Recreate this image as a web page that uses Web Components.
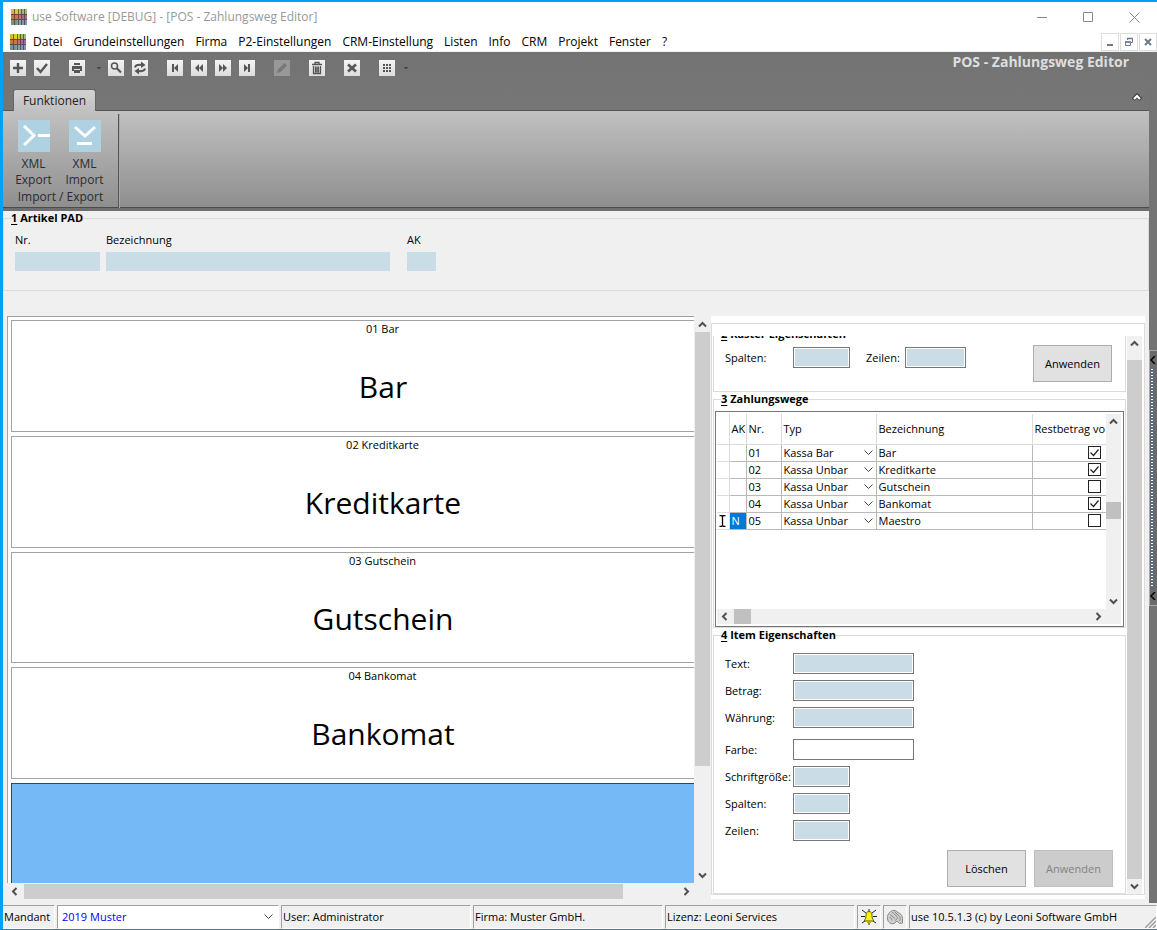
<!DOCTYPE html>
<html lang="de">
<head>
<meta charset="utf-8">
<meta name="viewport" content="width=device-width, initial-scale=1">
<title>use Software - POS - Zahlungsweg Editor</title>
<style>
  html, body { margin: 0; height: 100%; }
  body { font: 11px/16px "Open Sans", "Noto Sans", sans-serif; color: #000; background: #f0f0f0; }
</style>
</head>
<body>
<pos-app></pos-app>
<script>
function define(name, css, html, setup) {
  const template = document.createElement('template');
  template.innerHTML = `<style>*,:host{box-sizing:border-box}:host([hidden]){display:none}${css}</style>${html}`;
  customElements.define(name, class extends HTMLElement {
    connectedCallback() {
      if (this.shadowRoot) return;
      this.attachShadow({ mode: 'open' }).append(template.content.cloneNode(true));
      if (setup) setup(this, this.shadowRoot);
    }
  });
}

/* ---------- application mark ---------- */
define('app-logo', `:host{display:block;flex:none;width:16px;height:16px} svg{display:block}`, `
<svg width="16" height="16" viewBox="0 0 16 16" aria-hidden="true">
  <path fill="#d9b24c" d="M0 0h4v5H0z"/><path fill="#ccd226" d="M4 0h5v5H4z"/><path fill="#9fb87a" d="M9 0h7v5H9z"/>
  <path fill="#c67b27" d="M0 5h4v5H0z"/><path fill="#cf7064" d="M4 5h6v5H4z"/><path fill="#a56ba0" d="M10 5h6v5h-6z"/>
  <path fill="#7d9092" d="M0 10h6v6H0z"/><path fill="#7fa5ae" d="M6 10h5v6H6z"/><path fill="#8294b8" d="M11 10h5v6h-5z"/>
  <path stroke="#4a2a20" stroke-width="1" d="M0 5.500h16M0 10.500h16M3.500 0v16M7.500 0v16M10.500 0v16M13.500 0v16" opacity=".65"/>
</svg>`);

/* ---------- tool buttons ---------- */
const glyphs = {
  add: '<path d="M8 3v10M3 8h10" stroke-width="2.400"/>',
  ok: '<path d="M3 8l3.500 4L13 4" stroke-width="2.400"/>',
  print: '<path d="M5 3h6v2H5zM3 6h10v5h-2V9H5v2H3zM5 10h6v3H5z" fill="currentColor" stroke="none"/>',
  find: '<circle cx="6.500" cy="6" r="3"/><path d="M9 8.500l4 4" stroke-width="2.200"/>',
  reload: '<path d="M3 7.500C3.500 5 6 4.500 10 5M13 8.500c-.5 2.500-3 3-7 2.500" stroke-width="2"/><path d="M9 1.500L13.500 5 9 8zM7 8l-4.500 3L7 14.500z" fill="currentColor" stroke="none"/>',
  first: '<path d="M5 4h2v8H5zM11 4v8L7 8z" fill="currentColor" stroke="none"/>',
  prev: '<path d="M8 4v8L4 8zM12 4v8L8 8z" fill="currentColor" stroke="none"/>',
  next: '<path d="M4 4v8l4-4zM8 4v8l4-4z" fill="currentColor" stroke="none"/>',
  last: '<path d="M5 4v8l4-4zM9 4h2v8H9z" fill="currentColor" stroke="none"/>',
  edit: '<path d="M3 13l1-3.500L10.500 3 13 5.500 6.500 12z" fill="currentColor" stroke="none"/>',
  trash: '<path d="M3 4.500h10M6 4V2.500h4V4M4.500 6v7.500h7V6M6.500 6.500v6M9.500 6.500v6M8 6.500v6" stroke-width="1.300"/>',
  cancel: '<path d="M4 4.500l8 7M12 4.500l-8 7" stroke-width="2.600"/>',
  grid: '<path d="M4 4h2v2H4zM7 4h2v2H7zM10 4h2v2h-2zM4 7h2v2H4zM7 7h2v2H7zM10 7h2v2h-2zM4 10h2v2H4zM7 10h2v2H7zM10 10h2v2h-2z" fill="currentColor" stroke="none"/>'
};
define('tool-button', `
:host{display:block;flex:none}
button{display:block;width:16px;height:16px;padding:0;border:0;background:linear-gradient(#f4f4f5,#dcdcde);color:#555}
button:disabled{background:#989898;color:#777}
svg{display:block}`,
`<button type="button"><svg width="16" height="16" viewBox="0 0 16 16" fill="none" stroke="currentColor" stroke-width="1.500" aria-hidden="true"></svg></button>`,
(el, root) => {
  const b = root.querySelector('button');
  b.setAttribute('aria-label', el.getAttribute('name'));
  b.disabled = el.hasAttribute('disabled');
  root.querySelector('svg').innerHTML = glyphs[el.getAttribute('icon')];
});
define('tool-caret', `:host{display:block;flex:none;width:6px;height:3px;background:#484848;clip-path:polygon(0 0,100% 0,50% 100%)}`, ``);

/* ---------- scroll bar: thumb position is given as before/size/after shares ---------- */
define('scroll-bar', `
:host{display:flex;flex:none;background:#f0f0f0;width:15px;flex-direction:column}
:host([horizontal]){width:auto;height:15px;flex-direction:row}
svg{display:block;flex:none;width:15px;height:15px}
:host([horizontal]) svg{transform:rotate(-90deg)}
.thumb{background:var(--thumb,#cdcdcd)}
path{fill:none;stroke:#505050;stroke-width:2}`,
`<svg viewBox="0 0 15 15" aria-hidden="true"><path d="M4 9.500L7.500 6 11 9.500"/></svg><i class="pre"></i><i class="thumb"></i><i class="post"></i><svg viewBox="0 0 15 15" aria-hidden="true"><path d="M4 5.500L7.500 9 11 5.500"/></svg>`,
(el, root) => {
  const shares = el.getAttribute('shares').split(' ');
  ['.pre', '.thumb', '.post'].forEach((s, i) => root.querySelector(s).style.flex = shares[i] + ' 0 0px');
});

/* ---------- labelled text box ---------- */
define('text-field', `
:host{display:flex;align-items:center}
label{flex:none;width:var(--label,68px);white-space:nowrap}
input{min-width:0;width:var(--box,57px);height:21px;font:inherit;padding:0 4px;border:1px solid #767676;border-radius:0;background:#cadde6;box-shadow:inset 0 0 0 1px #fff;outline:0}
:host([stacked]){flex-direction:column;align-items:flex-start;gap:4px}
:host([stacked]) label{width:auto}
:host([stacked]) input{height:19px;border:0;box-shadow:none}
:host([blank]) input{background:#fff}`,
`<label for="box"></label><input id="box" type="text">`,
(el, root) => root.querySelector('label').textContent = el.getAttribute('label'));

/* ---------- group frame with numbered caption ---------- */
define('group-box', `
:host{display:block}
fieldset{margin:0;padding:0;border:1px solid #dcdcdc;min-width:0;height:100%;display:flow-root}
legend{margin-left:7px;padding:0;font-weight:700;line-height:14px}
u{text-underline-offset:2px}`,
`<fieldset><legend><u></u> <span></span></legend><slot></slot></fieldset>`,
(el, root) => {
  root.querySelector('u').textContent = el.getAttribute('number');
  root.querySelector('span').textContent = el.getAttribute('caption');
});

define('push-button', `
:host{display:block;flex:none}
button{display:block;width:79px;height:37px;padding:0;border:1px solid #adadad;background:#e1e1e1;font:inherit;color:#000}
button:disabled{background:#ccc;border-color:#bfbfbf;color:#838383}`,
`<button type="button"><slot></slot></button>`,
(el, root) => root.querySelector('button').disabled = el.hasAttribute('disabled'));

/* ---------- title bar and menu ---------- */
define('title-bar', `
:host{display:flex;align-items:center;height:30px;padding-left:8px;background:#fff;color:#999;font-size:12px}
span{flex:1;padding-left:5px}
button{width:46px;height:28px;border:0;padding:0;background:none;color:#888}
svg{display:block;margin:auto}`,
`<app-logo></app-logo><span>use Software [DEBUG] - [POS - Zahlungsweg Editor]</span>
<button aria-label="Minimieren"><svg width="11" height="11" fill="none" stroke="currentColor"><path d="M0 5.500h10"/></svg></button>
<button aria-label="Maximieren"><svg width="11" height="11" fill="none" stroke="currentColor"><path d="M.5.5h9v9h-9z"/></svg></button>
<button aria-label="Schließen"><svg width="11" height="11" fill="none" stroke="currentColor"><path d="M.5.5l10 10M10.500.5l-10 10"/></svg></button>`);

define('menu-bar', `
:host{display:flex;align-items:center;height:20px;padding-left:7px;background:#fff;border-bottom:1px solid #f0f0f0;font-size:12px}
nav{display:flex;flex:1;gap:11px;padding-left:7px}
a{color:#000;text-decoration:none;white-space:nowrap}
.mdi{display:flex;gap:1px}
button{width:18px;height:18px;padding:0;border:1px solid #dedede;background:#fff;color:#6b7a8c}
svg{display:block;margin:auto}`,
`<app-logo></app-logo><nav><a href="#">Datei</a><a href="#">Grundeinstellungen</a><a href="#">Firma</a><a href="#">P2-Einstellungen</a><a href="#">CRM-Einstellung</a><a href="#">Listen</a><a href="#">Info</a><a href="#">CRM</a><a href="#">Projekt</a><a href="#">Fenster</a><a href="#">?</a></nav>
<div class="mdi">
<button aria-label="Fenster minimieren"><svg width="10" height="10"><path fill="currentColor" d="M2 7h6v2H2z"/></svg></button>
<button aria-label="Fenster wiederherstellen"><svg width="10" height="10" fill="none" stroke="currentColor"><path d="M3.500 3V1.500h5v4H7M1 5h5.500v3.500h-5V5"/><path d="M3 1.500h6M1 5h6" stroke-width="1.500"/></svg></button>
<button aria-label="Fenster schließen"><svg width="10" height="10" fill="none" stroke="currentColor" stroke-width="2"><path d="M2 2l6 6M8 2L2 8"/></svg></button>
</div>`);

/* ---------- tool bar and ribbon ---------- */
define('tool-bar', `
:host{display:block;height:59px;background:linear-gradient(#737373,#767676);border-bottom:1px solid #555}
.row{display:flex;align-items:flex-start;height:36px}
.tools{display:flex;align-items:center;gap:19px;flex:1;padding:8px 0 0 7px}
.set{display:flex;align-items:center;gap:8px}
.menu{margin:0 -2px 0 3px}
h1{margin:0;padding:0 20px 0 0;font-size:14px;line-height:20px;font-weight:700;color:#dedede}
.tabs{display:flex;align-items:flex-end;height:23px;padding-left:10px}
.tabs button{height:23px;width:83px;border:1px solid #666;border-bottom:0;border-radius:3px 3px 0 0;background:linear-gradient(#d2d2d2,#bfbfbf);margin-bottom:-1px;font:inherit;font-size:12px;color:#222;padding:0 0 1px}
.fold{margin-left:auto;padding:0 7px 10px}
.fold svg{display:block}`,
`<div class="row"><div class="tools">
<div class="set"><tool-button icon="add" name="Neu"></tool-button><tool-button icon="ok" name="Speichern"></tool-button></div>
<div class="set"><tool-button icon="print" name="Drucken"></tool-button><tool-caret class="menu"></tool-caret><tool-button icon="find" name="Suchen"></tool-button><tool-button icon="reload" name="Aktualisieren"></tool-button></div>
<div class="set"><tool-button icon="first" name="Erster"></tool-button><tool-button icon="prev" name="Voriger"></tool-button><tool-button icon="next" name="Nächster"></tool-button><tool-button icon="last" name="Letzter"></tool-button></div>
<tool-button icon="edit" name="Bearbeiten" disabled></tool-button><tool-button icon="trash" name="Löschen"></tool-button><tool-button icon="cancel" name="Abbrechen"></tool-button>
<div class="set"><tool-button icon="grid" name="Ansicht"></tool-button><tool-caret></tool-caret></div>
</div><h1>POS - Zahlungsweg Editor</h1></div>
<div class="tabs"><button type="button">Funktionen</button><div class="fold"><svg width="10" height="8" viewBox="0 0 10 8" fill="none" aria-hidden="true"><path d="M1 6.500l4-4 4 4" stroke="#444" stroke-width="4"/><path d="M2 6l3-3 3 3" stroke="#fff" stroke-width="2"/></svg></div></div>`);

define('ribbon-action', `
:host{display:block}
button{display:block;width:51px;padding:0;border:0;background:none;font:inherit;font-size:12px;line-height:16px;color:#2c2c2c}
svg{display:block;margin:0 auto 4px;background:#aed2e1}
path{fill:none;stroke:#fff;stroke-width:3}`,
`<button type="button"><svg width="32" height="32" aria-hidden="true"><path/></svg><slot></slot></button>`,
(el, root) => root.querySelector('path').setAttribute('d', el.getAttribute('kind') === 'out' ? 'M6 6l10 9.500L6 25M20 15.500h12' : 'M6 7l10 9L26 7M8 23.500h15'));

define('ribbon-bar', `
:host{display:flex;height:100px;background:linear-gradient(#c1c1c1,#8e8e8e);border-bottom:3px solid #6f6f6f;box-shadow:inset 0 -1px #4c4c4c}
section{width:116px;margin-top:3px;border-right:1px solid #555;box-shadow:1px 0 #a8a8a8;font-size:12px;color:#2c2c2c;text-align:center}
.acts{display:flex;padding:6px 0 0 5px}
p{margin:1px 0 0;line-height:16px}`,
`<section><div class="acts"><ribbon-action kind="out">XML<br>Export</ribbon-action><ribbon-action kind="in">XML<br>Import</ribbon-action></div><p>Import / Export</p></section>`);

/* ---------- payment pad ---------- */
define('pay-tile', `
:host{display:flex;flex-direction:column;align-items:center;min-height:0;overflow:hidden;background:#fff;border:1px solid #a3a3a3;border-right:0;padding-left:60px;text-align:center}
small{font-size:11px;line-height:16px;padding-right:1px}
b{font-weight:400;font-size:30px;line-height:44px;margin-top:28px}
:host([active]){background:#75baf6;border:0;border-top:1px solid #2d4a50;border-left:1px solid #2d4a50}`,
`<small></small><b></b>`,
(el, root) => {
  root.querySelector('small').textContent = el.getAttribute('code') || '';
  root.querySelector('b').textContent = el.getAttribute('text') || '';
});
define('pay-pad', `
:host{display:grid;grid-template-columns:minmax(0,1fr) 16px;grid-template-rows:minmax(0,1fr) 16px}
.tiles{display:grid;grid-template-rows:repeat(4,minmax(0,1fr)) 100px;gap:4px;padding:3px 0 0 3px;background:#fff;border:1px solid #a3a3a3;border-width:1px 0 0 1px;margin-right:1px}
.v{margin-top:1px}.h{margin:1px 1px 0 0}`,
`<div class="tiles"><pay-tile code="01 Bar" text="Bar"></pay-tile><pay-tile code="02 Kreditkarte" text="Kreditkarte"></pay-tile><pay-tile code="03 Gutschein" text="Gutschein"></pay-tile><pay-tile code="04 Bankomat" text="Bankomat"></pay-tile><pay-tile active></pay-tile></div>
<scroll-bar class="v" shares="0 432 101"></scroll-bar><scroll-bar class="h" horizontal shares="2 598 56"></scroll-bar>`);

/* ---------- payment table ---------- */
define('pay-table', `
:host{display:grid;grid-template-columns:minmax(0,1fr) 15px;grid-template-rows:195px 15px;padding:2px 2px 2px 1px;border:1px solid #767676;background:#fff;--thumb:#c0c0c0}
.view{overflow:hidden}
table{border-collapse:collapse;table-layout:fixed;width:100%}
th,td{padding:0 0 0 2px;font-weight:400;text-align:left;white-space:nowrap;overflow:hidden;border:1px solid #b9b9b9;border-width:0 1px 1px 0;height:17px;line-height:16px}
th{height:30px;border-color:#dcdcdc}
th:last-child,td:last-child{border-right:0}
td:first-child{border-color:#dcdcdc;padding:0}
td:first-child svg{display:block;margin:auto}
td.n{background:#0078d7;color:#fff}
td:last-child{text-align:right;padding-right:5px}
.type{display:flex;align-items:center;padding-right:2px}
select{appearance:none;flex:1;min-width:0;height:16px;border:0;border-radius:0;padding:0;background:none;font:inherit;color:#000}
input{appearance:none;display:block;margin:0;width:13px;height:13px;border:1px solid #222;background:#fff}
.ck{display:grid;justify-content:end;align-items:center}
.ck input,.ck svg{grid-area:1/1}
.ck svg{z-index:1;pointer-events:none;visibility:hidden}
.ck input:checked+svg{visibility:visible}
.corner{background:#f0f0f0}`,
`<div class="view"><table><colgroup><col style="width:12px"><col style="width:17px"><col style="width:35px"><col style="width:95px"><col><col style="width:74px"></colgroup>
<thead><tr><th></th><th>AK</th><th>Nr.</th><th>Typ</th><th>Bezeichnung</th><th>Restbetrag vo</th></tr></thead><tbody></tbody></table></div>
<scroll-bar shares="73 17 75"></scroll-bar><scroll-bar horizontal shares="2 17 340"></scroll-bar><div class="corner"></div>`,
(el, root) => {
  const rows = [['01', 'Kassa Bar', 'Bar', 1], ['02', 'Kassa Unbar', 'Kreditkarte', 1], ['03', 'Kassa Unbar', 'Gutschein', 0], ['04', 'Kassa Unbar', 'Bankomat', 1], ['05', 'Kassa Unbar', 'Maestro', 0]];
  root.querySelector('tbody').innerHTML = rows.map(([nr, type, name, on], i) => `<tr>
<td>${i === 4 ? '<svg width="7" height="12" fill="none" stroke="#000" aria-hidden="true"><path d="M.5.5h2l1 1 1-1h2M.5 11.500h2l1-1 1 1h2M3.500 1.500v9" stroke-width="1.300"/></svg>' : ''}</td>
<td class="${i === 4 ? 'n' : ''}">${i === 4 ? 'N' : ''}</td><td>${nr}</td>
<td><div class="type"><select aria-label="Typ ${nr}"><option>${type}</option></select><svg width="10" height="6" fill="none" stroke="#444" aria-hidden="true"><path d="M.5.5l4 4 4-4"/></svg></div></td>
<td>${name}</td><td><div class="ck"><input type="checkbox" aria-label="Restbetrag ${nr}" ${on ? 'checked' : ''}><svg width="13" height="13" fill="none" stroke="#222" stroke-width="1.200" aria-hidden="true"><path d="M2.500 6.500l3 3 5-6"/></svg></div></td></tr>`).join('');
});

/* ---------- property pane ---------- */
define('property-pane', `
:host{display:block;background:#fff;padding:7px 0 4px}
.frame{height:100%;border:1px solid #dcdcdc;padding:12px 2px 0 1px;display:grid;grid-template-columns:minmax(0,1fr) 15px;column-gap:1px}
.view{overflow:hidden;display:flex;flex-direction:column;min-height:0}
.g2{flex:none;height:65px;margin-top:-9px}
.g3{flex:none;height:236px}
.g4{flex:1;min-height:0}
.raster{display:flex;align-items:flex-start;padding:4px 13px 0 11px}
.raster text-field+text-field{--label:39px;--box:61px;margin-left:16px}
.raster push-button{margin-left:auto}
.raster text-field{margin-top:2px}
pay-table{margin:5px 1px 0}
.form{display:grid;gap:6px;padding:11px 0 0 11px;--box:121px}
.form .short{--box:57px}
.form .gap{margin-top:5px}
.acts{display:flex;justify-content:flex-end;gap:8px;padding:9px 12px 0 0}
`,
`<div class="frame"><div class="view">
<group-box class="g2" number="2" caption="Raster Eigenschaften"><div class="raster"><text-field label="Spalten:"></text-field><text-field label="Zeilen:"></text-field><push-button>Anwenden</push-button></div></group-box>
<group-box class="g3" number="3" caption="Zahlungswege"><pay-table></pay-table></group-box>
<group-box class="g4" number="4" caption="Item Eigenschaften"><div class="form">
<text-field label="Text:"></text-field><text-field label="Betrag:"></text-field><text-field label="Währung:"></text-field><text-field class="gap" blank label="Farbe:"></text-field>
<text-field class="short" label="Schriftgröße:"></text-field><text-field class="short" label="Spalten:"></text-field><text-field class="short" label="Zeilen:"></text-field></div>
<div class="acts"><push-button>Löschen</push-button><push-button disabled>Anwenden</push-button></div></group-box>
</div><scroll-bar shares="9 520 0"></scroll-bar></div>`);

/* ---------- docking strip at the right edge ---------- */
define('dock-strip', `
:host{display:flex;flex-direction:column;width:8px;background:#747474;padding-top:298px}
.grip{display:flex;flex-direction:column;justify-content:space-between;height:256px;border:1px solid #a8a8a8;border-right:0;background:#6a6a6a}
.dots{flex:1;width:2px;margin-left:1px;background:repeating-linear-gradient(#fff 0 1px,#4d6f94 1px 3px)}
svg{display:block;margin:5px 0}`,
`<div class="grip"><svg width="6" height="8"><path d="M5 0L1 4l4 4" fill="none" stroke="#000" stroke-width="1.500"/></svg><div class="dots"></div><svg width="6" height="8"><path d="M5 0L1 4l4 4" fill="none" stroke="#000" stroke-width="1.500"/></svg></div>`);

/* ---------- status bar ---------- */
define('status-bar', `
:host{display:grid;grid-template-columns:52px 222px repeat(3,minmax(0,190fr)) 24px 24px minmax(0,248fr);gap:0 2px;height:26px;padding-top:2px;background:#f0f0f0;position:relative}
div{display:flex;align-items:center;padding:0 1px;border:1px solid #a0a0a0;border-color:#a0a0a0 #fff #fff #a0a0a0;white-space:nowrap;overflow:hidden}
.sel{background:#fff}
.first{border-left:0}
.sel svg{margin-right:3px}
select{appearance:none;flex:1;min-width:0;border:0;background:none;color:#00f;font:inherit;padding:0 3px}
.ic{justify-content:center;padding:0}
.grip{position:absolute;right:1px;bottom:1px}`,
`<div class="first">Mandant</div>
<div class="sel"><select aria-label="Mandant"><option>2019 Muster</option></select><svg width="10" height="6" fill="none" stroke="#444" aria-hidden="true"><path d="M.5.5l4 4 4-4"/></svg></div>
<div>User: Administrator</div><div>Firma: Muster GmbH.</div><div>Lizenz: Leoni Services</div>
<div class="ic"><svg width="16" height="16" viewBox="0 0 16 16" aria-hidden="true"><path d="M1 1l4 3M15 1l-4 3M0 7.500h4M16 7.500h-4M1 14l3-2M15 14l-3-2M8 0v2M8 14v2" stroke="#222" fill="none"/><path d="M8 2.500c2 0 3 1.500 3 4 0 2 .5 3.500 1.500 4.500v1h-9v-1C4.500 10 5 8.500 5 6.500c0-2.500 1-4 3-4z" fill="#fff200" stroke="#5c5c28"/><path d="M6 12.500h4v1.500H6z" fill="#b8a800"/></svg></div>
<div class="ic"><svg width="18" height="16" viewBox="0 0 18 16" fill="#cfcfcf" stroke="#8a8a8a" aria-hidden="true"><path d="M1.500 10C1 6 3 3 6.500 1.500c2.500-.6 4 .5 5.500 2 2.500 1 4.500 3 4.500 6v4.500l-3 .5-2.500-2.500-3 2.500c-3 1-6-1-6.500-4.500z"/><path d="M6 3l5 4.500M8.500 2.500l5 5M4 5.500l5 4M11 7.500c1 1.500 0 3-2 4M13.500 7.500c1 1.500 1 3 0 4.500M3.500 8.500c1.500 0 2.500 1 2.500 3" fill="none"/></svg></div>
<div>use 10.5.1.3 (c) by Leoni Software GmbH</div>
<svg class="grip" width="11" height="11" stroke="#a0a0a0" stroke-width="1.500" aria-hidden="true"><path d="M11 0L0 11M11 4L4 11M11 8L8 11"/></svg>`);

/* ---------- page ---------- */
define('pos-app', `
:host{display:flex;flex-direction:column;height:100vh;min-height:900px;border:2px solid #00a2f5;border-width:2px 0 0 3px;border-bottom:1px solid #2b82ab}
.work{flex:1;min-height:0;display:flex}
.main{flex:1;min-width:0;display:flex;flex-direction:column}
.head{flex:none;height:80px}
.fields{display:flex;padding:7px 0 0 11px;gap:6px}
.number{--box:85px}
.wide{--box:284px}
.code{--box:29px;margin-left:11px}
.body{flex:1;min-height:0;display:grid;grid-template-columns:minmax(0,704fr) minmax(0,434fr);padding:25px 4px 4px 4px}`,
`<title-bar></title-bar><menu-bar></menu-bar>
<div class="work"><div class="main"><tool-bar></tool-bar><ribbon-bar></ribbon-bar>
<group-box class="head" number="1" caption="Artikel PAD"><div class="fields"><text-field stacked class="number" label="Nr."></text-field><text-field stacked class="wide" label="Bezeichnung"></text-field><text-field stacked class="code" label="AK"></text-field></div></group-box>
<div class="body"><pay-pad></pay-pad><property-pane></property-pane></div></div><dock-strip></dock-strip></div>
<status-bar></status-bar>`);
</script>
</body>
</html>
